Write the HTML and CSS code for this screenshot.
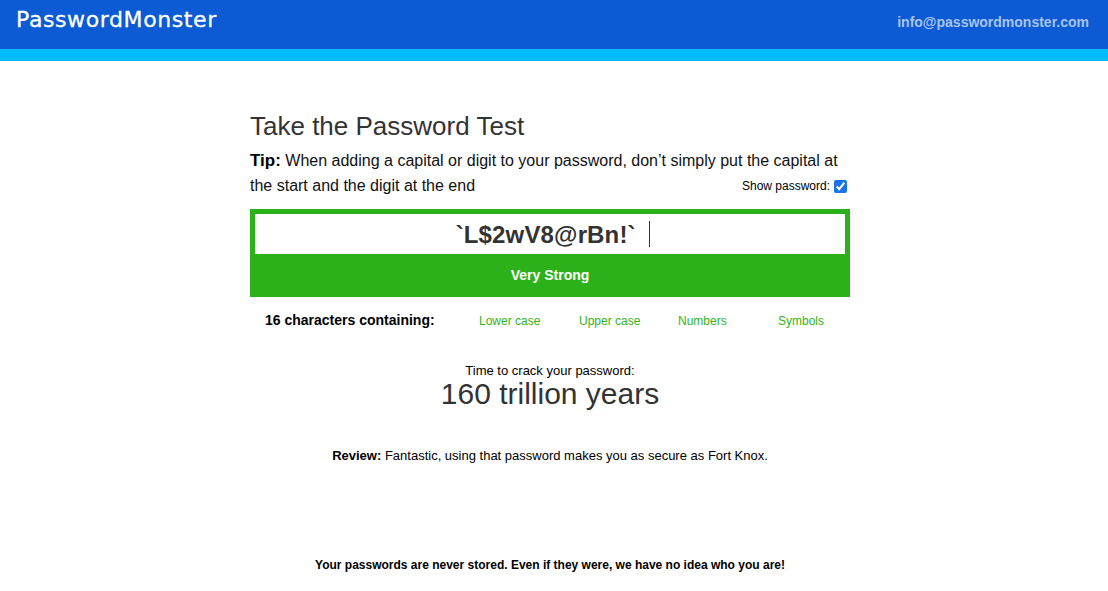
FILE: index.html
```html
<!DOCTYPE html>
<html>
<head>
<meta charset="utf-8">
<link rel="stylesheet" href="styles.css">
</head>
<body>
<header class="topbar">
  <div class="brand">PasswordMonster</div>
  <div class="email">info@passwordmonster.com</div>
</header>
<div class="band"></div>
<div class="page">
<main class="content">
  <h1 class="title">Take the Password Test</h1>
  <div class="tip-row">
    <p class="tip"><b class="tip-label">Tip:</b> When adding a capital or digit to your password, don’t simply put the capital at the start and the digit at the end</p>
    <label class="show">Show password: <input type="checkbox" checked class="chk"></label>
  </div>
  <div class="meter">
    <div class="pw-field"><span class="pw-text">`L$2wV8@rBn!`  </span><span class="caret"></span></div>
    <div class="strength">Very Strong</div>
  </div>
  <div class="contains">
    <div class="count">16 characters containing:</div>
    <div class="kind">Lower case</div>
    <div class="kind">Upper case</div>
    <div class="kind">Numbers</div>
    <div class="kind">Symbols</div>
  </div>
  <div class="crack">
    <div class="crack-label">Time to crack your password:</div>
    <div class="crack-time">160 trillion years</div>
  </div>
  <p class="review"><b>Review:</b> Fantastic, using that password makes you as secure as Fort Knox.</p>
  <p class="footer-note">Your passwords are never stored. Even if they were, we have no idea who you are!</p>
</main>
</div>
</body>
</html>
```

FILE: styles.css
```css
* { box-sizing: border-box; }
html, body { margin: 0; padding: 0; background: #fff; }
body { font-family: "Liberation Sans", Arial, sans-serif; color: #000; }

.topbar {
  height: 49px;
  background: #0c5ad4;
  display: flex;
  align-items: flex-start;
  justify-content: space-between;
  padding: 0 19px 0 16px;
}
.brand {
  color: #fff;
  font-family: "DejaVu Sans", sans-serif;
  font-size: 22px;
  letter-spacing: 0.6px;
  margin-top: 7px;
  -webkit-text-stroke: 0.3px #fff;
}
.email {
  color: #a9c4f0;
  font-weight: bold;
  font-size: 14px;
  margin-top: 14px;
}
.band { height: 12px; background: #00bbfd; }

.page { padding-right: 8px; }
.content {
  width: 600px;
  margin: 0 auto;
  padding-top: 50px;
}
.title {
  font-weight: normal;
  font-size: 26px;
  color: #333;
  margin: 0 0 7px 0;
  line-height: 30px;
}
.tip-row { position: relative; }
.tip {
  margin: 0;
  font-size: 16px;
  line-height: 25px;
  color: #111;
  padding-right: 6px;
}
.tip-label { font-size: 17px; color: #000; }
.show {
  position: absolute;
  right: 3px;
  bottom: 5px;
  font-size: 12px;
  display: flex;
  align-items: center;
  gap: 4px;
}
.chk {
  margin: 0;
  width: 13px;
  height: 13px;
  accent-color: #1a73e8;
}

.meter {
  margin-top: 11px;
  background: #2db11a;
  padding: 5px 5px 0 5px;
}
.pw-field {
  background: #fff;
  height: 40px;
  display: flex;
  align-items: center;
  justify-content: center;
  padding-left: 6px;
}
.pw-text {
  white-space: pre;
  font-weight: bold;
  font-size: 24px;
  color: #333;
  margin-top: 2px;
  letter-spacing: 0.15px;
}
.caret {
  display: inline-block;
  width: 1px;
  height: 26px;
  background: #333;
}
.strength {
  height: 43px;
  display: flex;
  align-items: center;
  justify-content: center;
  color: #fff;
  font-weight: bold;
  font-size: 14px;
  padding-bottom: 2px;
}

.contains {
  display: grid;
  grid-template-columns: 229px 100px 99px 100px 1fr;
  align-items: center;
  margin-top: 17px;
}
.count {
  font-weight: bold;
  font-size: 14px;
  padding-left: 15px;
  margin-top: -2px;
}
.kind {
  color: #33b31b;
  font-size: 12px;
  text-align: left;
}

.crack {
  text-align: center;
  margin-top: 35px;
}
.crack-label { font-size: 13px; line-height: 15px; }
.crack-time { font-size: 30px; line-height: 32px; color: #333; }

.review {
  text-align: center;
  font-size: 13px;
  margin: 38px 0 0 0;
}
.footer-note {
  text-align: center;
  font-size: 12px;
  font-weight: bold;
  margin: 95px 0 0 0;
}
```
